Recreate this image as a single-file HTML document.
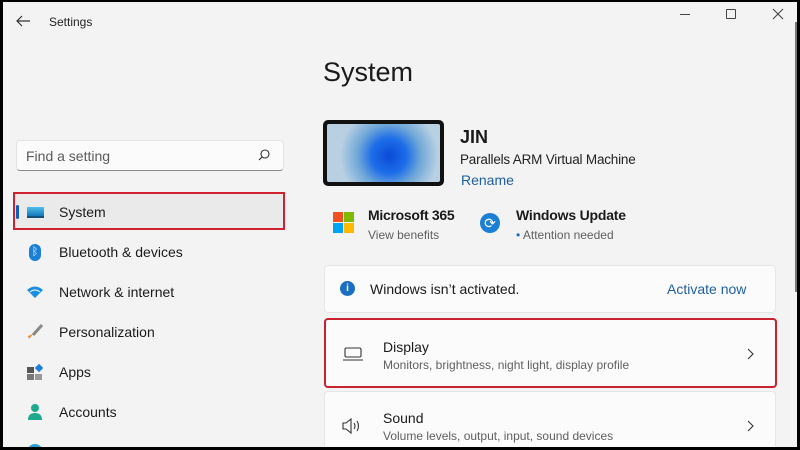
<!DOCTYPE html>
<html><head><meta charset="utf-8"><style>
*{box-sizing:border-box;margin:0;padding:0}
body{width:800px;height:450px;background:#000;font-family:"Liberation Sans",sans-serif;position:relative;overflow:hidden;color:#1a1a1a}
.win{position:absolute;left:3px;top:2px;width:794px;height:445px;background:#f3f3f3;overflow:hidden}
.a{position:absolute}
.nav{position:absolute;left:14px;width:268px;height:36px;font-size:14px;display:flex;align-items:center}
.nav .ic{width:22px;margin-left:7px;margin-right:13px;display:flex;justify-content:center}
.card{position:absolute;left:321px;width:452px;background:#fbfbfb;border:1px solid #e6e6e6;border-radius:4px}
.t{font-size:14px;color:#1a1a1a}
.s{font-size:12px;color:#5f5f5f}
</style></head><body><div class="win">
<svg class="a" style="left:12px;top:12px" width="16" height="14"><path d="M2 7H15M7 2L2 7L7 12" stroke="#333" stroke-width="1.2" fill="none"/></svg>
<div class="a" style="left:46px;top:13px;font-size:12px;color:#222">Settings</div>
<div class="a" style="left:677px;top:12px;width:10px;height:1px;background:#444"></div>
<div class="a" style="left:723px;top:7px;width:10px;height:10px;border:1px solid #444;border-radius:1px"></div>
<svg class="a" style="left:769px;top:6px" width="12" height="12"><path d="M1 1L11 11M11 1L1 11" stroke="#444" stroke-width="1.1"/></svg>
<div class="a" style="left:792px;top:20px;width:2px;height:270px;background:#777"></div>

<div class="a" style="left:13px;top:138px;width:268px;height:31px;background:#fbfbfb;border:1px solid #e3e3e3;border-bottom:1px solid #8a8a8a;border-radius:4px"></div>
<div class="a" style="left:23px;top:146px;font-size:14px;color:#5a5a5a">Find a setting</div>
<svg class="a" style="left:255px;top:147px" width="12" height="12"><circle cx="7" cy="5" r="4" stroke="#333" fill="none" stroke-width="1.1"/><path d="M4 8L1 11" stroke="#333" stroke-width="1.2"/></svg>

<div class="a" style="left:10px;top:190px;width:272px;height:38px;border:2px solid #d0222e;background:#eaeaea"></div>
<div class="a" style="left:13px;top:203px;width:3px;height:14px;background:#0f5fb8;border-radius:2px"></div>
<div class="nav" style="top:192px"><span class="ic"><span style="width:17px;height:11px;background:linear-gradient(#4ec0ec,#1478b8);display:block;border-bottom:2px solid #12507e"></span></span>System</div>
<div class="nav" style="top:232px"><span class="ic"><span style="width:12px;height:17px;border-radius:6px;background:#1b7fd6;color:#fff;font-size:11px;text-align:center;line-height:17px">ᛒ</span></span>Bluetooth &amp; devices</div>
<div class="nav" style="top:272px"><span class="ic"><svg width="16" height="12"><path d="M0 4Q8 -3 16 4L8 12Z" fill="#1b8fe0"/><path d="M3 6Q8 2 13 6" stroke="#fff" fill="none"/></svg></span>Network &amp; internet</div>
<div class="nav" style="top:312px"><span class="ic"><svg width="16" height="16"><path d="M15 1L6 11" stroke="#888" stroke-width="3"/><path d="M6 10L2 15L1 12Z" fill="#f08a2c"/></svg></span>Personalization</div>
<div class="nav" style="top:352px"><span class="ic"><svg width="16" height="16"><rect x="0" y="3" width="7" height="6" fill="#555"/><rect x="0" y="10" width="7" height="6" fill="#777"/><rect x="8" y="10" width="7" height="6" fill="#999"/><rect x="9" y="1" width="6" height="6" fill="#1b7fd6" transform="rotate(45 12 4)"/></svg></span>Apps</div>
<div class="nav" style="top:392px"><span class="ic"><svg width="16" height="16"><circle cx="8" cy="4" r="4" fill="#1eaa8d"/><path d="M1 16Q1 9 8 9Q15 9 15 16Z" fill="#1eaa8d"/></svg></span>Accounts</div>
<div class="nav" style="top:432px"><span class="ic"><span style="width:16px;height:16px;border-radius:8px;background:#2a9ed8;display:block"></span></span>Time &amp; language</div>

<div class="a" style="left:320px;top:55px;font-size:27px;color:#1a1a1a">System</div>
<div class="a" style="left:320px;top:118px;width:121px;height:66px;background:#111;border-radius:5px;padding:4px">
<div style="width:100%;height:100%;border-radius:2px;background:radial-gradient(circle at 55% 55%,#0a4ad8 0,#1d6de8 25%,#6fa7d8 45%,#b8d0e2 70%)"></div></div>
<div class="a" style="left:457px;top:125px;font-size:18px;font-weight:bold">JIN</div>
<div class="a" style="left:457px;top:150px;font-size:13.5px;color:#222;letter-spacing:-0.2px">Parallels ARM Virtual Machine</div>
<div class="a" style="left:458px;top:170px;font-size:14px;color:#1f5fa0">Rename</div>

<svg class="a" style="left:330px;top:210px" width="21" height="21"><rect width="10" height="10" fill="#f25022"/><rect x="11" width="10" height="10" fill="#7fba00"/><rect y="11" width="10" height="10" fill="#00a4ef"/><rect x="11" y="11" width="10" height="10" fill="#ffb900"/></svg>
<div class="a" style="left:365px;top:205px;font-size:14px;font-weight:bold;letter-spacing:-0.3px">Microsoft 365</div>
<div class="a s" style="left:365px;top:226px">View benefits</div>
<div class="a" style="left:477px;top:211px;width:20px;height:20px;border-radius:10px;background:#1b7fd6;color:#fff;font-size:14px;text-align:center;line-height:20px">⟳</div>
<div class="a" style="left:513px;top:205px;font-size:14px;font-weight:bold;letter-spacing:-0.2px">Windows Update</div>
<div class="a s" style="left:513px;top:226px"><span style="color:#1b6fc0">•</span> Attention needed</div>

<div class="card" style="top:263px;height:48px"></div>
<div class="a" style="left:337px;top:279px;width:15px;height:15px;border-radius:8px;background:#1b6fc0;color:#fff;font-size:10px;font-weight:bold;text-align:center;line-height:15px">i</div>
<div class="a t" style="left:367px;top:279px">Windows isn’t activated.</div>
<div class="a t" style="left:664px;top:279px;color:#1f5fa0">Activate now</div>

<div class="card" style="top:316px;height:70px;border:2px solid #c8222e;left:321px;width:453px"></div>
<svg class="a" style="left:340px;top:345px" width="20" height="14"><rect x="2" y="1" width="16" height="9" rx="1.5" stroke="#333" fill="none" stroke-width="1.1"/><path d="M0 13H20" stroke="#333" stroke-width="1.1"/></svg>
<div class="a t" style="left:380px;top:337px">Display</div>
<div class="a s" style="left:380px;top:356px">Monitors, brightness, night light, display profile</div>
<svg class="a" style="left:744px;top:346px" width="8" height="12"><path d="M1 1L6 6L1 11" stroke="#333" fill="none" stroke-width="1.1"/></svg>

<div class="card" style="top:389px;height:70px"></div>
<svg class="a" style="left:339px;top:416px" width="20" height="16"><path d="M1 5H4L9 1V15L4 11H1Z" stroke="#333" fill="none" stroke-width="1.1"/><path d="M12 5Q14 8 12 11M15 3Q18 8 15 13" stroke="#333" fill="none" stroke-width="1.1"/></svg>
<div class="a t" style="left:380px;top:408px">Sound</div>
<div class="a s" style="left:380px;top:427px">Volume levels, output, input, sound devices</div>
<svg class="a" style="left:744px;top:418px" width="8" height="12"><path d="M1 1L6 6L1 11" stroke="#333" fill="none" stroke-width="1.1"/></svg>
</div></body></html>
